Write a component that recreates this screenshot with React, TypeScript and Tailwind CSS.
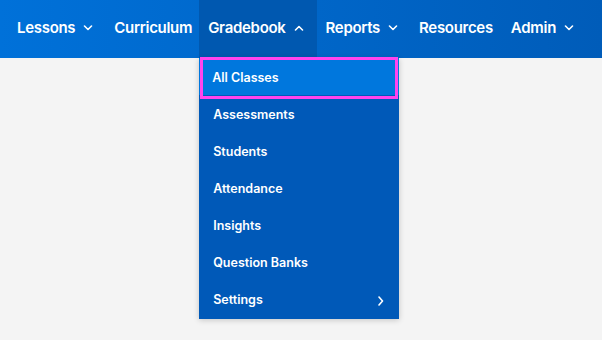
import React from "react";

const Chevron = ({ up = false }: { up?: boolean }) => (
  <svg width="10" height="6" viewBox="0 0 10 6" className="ml-[8px]" fill="none">
    <path
      d={up ? "M1.5 5 L5 1.5 L8.5 5" : "M1.5 1 L5 4.5 L8.5 1"}
      stroke="white"
      strokeWidth="1.6"
      strokeLinecap="round"
      strokeLinejoin="round"
    />
  </svg>
);

const navItems: { label: string; chevron?: "down" | "up"; active?: boolean; pr: string }[] = [
  { label: "Lessons", chevron: "down", pr: "pr-[12px]" },
  { label: "Curriculum", pr: "pr-[7px]" },
  { label: "Gradebook", chevron: "up", active: true, pr: "pr-[13px]" },
  { label: "Reports", chevron: "down", pr: "pr-[12px]" },
  { label: "Resources", pr: "pr-[9px]" },
  { label: "Admin", chevron: "down", pr: "pr-[12px]" },
];

const menu = ["All Classes", "Assessments", "Students", "Attendance", "Insights", "Question Banks", "Settings"];

export default function App() {
  return (
    <div
      className="w-[602px] h-[340px] bg-[#f4f4f4] overflow-hidden"
      style={{ fontFamily: "Inter, 'Noto Sans', sans-serif" }}
    >
      <div className="h-[58px] flex items-stretch pl-[8px] bg-gradient-to-r from-[#0071d9] to-[#005cb9]">
        {navItems.map((it) => (
          <div
            key={it.label}
            className={`relative flex items-center pb-[2px] pl-[9px] ${it.pr} ${it.active ? "bg-[#0058b0]" : ""}`}
          >
            <span className="text-white text-[15px] font-semibold tracking-[-0.3px]">{it.label}</span>
            {it.chevron && <Chevron up={it.chevron === "up"} />}
            {it.active && (
              <div className="absolute left-0 top-[58px] w-[200px] pb-[2px] bg-[#0059b8] shadow-[0_1px_6px_rgba(0,0,0,0.2)] z-10">
                {menu.map((m, i) => (
                  <div
                    key={m}
                    className={`relative h-[37px] flex items-center justify-between pt-[4px] pl-[14px] pr-[15px] text-white text-[12.5px] font-semibold ${
                      i === 0 ? "bg-[#0077dd]" : ""
                    }`}
                  >
                    {i === 0 && (
                      <div className="absolute left-[1px] right-[1px] top-[-1px] bottom-[-4px] border-[3px] border-[#ff44ee]" />
                    )}
                    <span className={`relative ${i === 0 ? "ml-[-1px]" : ""}`}>{m}</span>
                    {m === "Settings" && (
                      <svg width="6" height="10" viewBox="0 0 6 10" fill="none">
                        <path d="M1 1 L4.5 5 L1 9" stroke="white" strokeWidth="1.6" strokeLinecap="round" strokeLinejoin="round" />
                      </svg>
                    )}
                  </div>
                ))}
              </div>
            )}
          </div>
        ))}
      </div>
    </div>
  );
}
